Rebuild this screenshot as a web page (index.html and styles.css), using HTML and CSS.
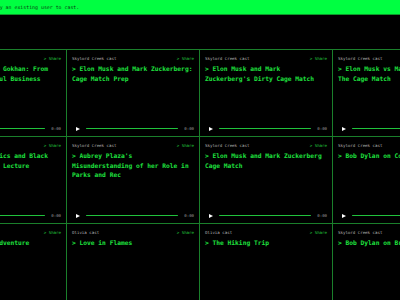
FILE: index.html
```html
<!DOCTYPE html>
<html>
<head>
  <meta charset="UTF-8">
  <meta name="viewport" content="width=device-width, initial-scale=1.0">
  <title>Casts</title>
  <link rel="stylesheet" href="styles.css">
</head>
<body>

  <div class="banner">
    <span class="banner-text">Or try an existing user to cast.</span>
  </div>

  <div class="casts">
    <div class="cast-card">
      <div class="cast-head"><span class="cast-user">Gokhan cast</span><a class="share">&gt; Share</a></div>
      <h3 class="cast-title">&gt; Interview with Gokhan: From Zero to Successful Business</h3>
      <div class="player"><span class="play"></span><span class="track"></span><span class="time">0:00</span></div>
    </div>
    <div class="cast-card">
      <div class="cast-head"><span class="cast-user">Skylord Creek cast</span><a class="share">&gt; Share</a></div>
      <h3 class="cast-title">&gt; Elon Musk and Mark Zuckerberg: Cage Match Prep</h3>
      <div class="player"><span class="play"></span><span class="track"></span><span class="time">0:00</span></div>
    </div>
    <div class="cast-card">
      <div class="cast-head"><span class="cast-user">Skylord Creek cast</span><a class="share">&gt; Share</a></div>
      <h3 class="cast-title">&gt; Elon Musk and Mark Zuckerberg's Dirty Cage Match</h3>
      <div class="player"><span class="play"></span><span class="track"></span><span class="time">0:00</span></div>
    </div>
    <div class="cast-card">
      <div class="cast-head"><span class="cast-user">Skylord Creek cast</span><a class="share">&gt; Share</a></div>
      <h3 class="cast-title">&gt; Elon Musk vs Mark Zuckerberg: The Cage Match</h3>
      <div class="player"><span class="play"></span><span class="track"></span><span class="time">0:00</span></div>
    </div>

    <div class="cast-card">
      <div class="cast-head"><span class="cast-user">Skylord Creek cast</span><a class="share">&gt; Share</a></div>
      <h3 class="cast-title">&gt; Hawking's Physics and Black Holes: The Reith Lecture</h3>
      <div class="player"><span class="play"></span><span class="track"></span><span class="time">0:00</span></div>
    </div>
    <div class="cast-card">
      <div class="cast-head"><span class="cast-user">Skylord Creek cast</span><a class="share">&gt; Share</a></div>
      <h3 class="cast-title">&gt; Aubrey Plaza's Misunderstanding of her Role in Parks and Rec</h3>
      <div class="player"><span class="play"></span><span class="track"></span><span class="time">0:00</span></div>
    </div>
    <div class="cast-card">
      <div class="cast-head"><span class="cast-user">Skylord Creek cast</span><a class="share">&gt; Share</a></div>
      <h3 class="cast-title">&gt; Elon Musk and Mark Zuckerberg Cage Match</h3>
      <div class="player"><span class="play"></span><span class="track"></span><span class="time">0:00</span></div>
    </div>
    <div class="cast-card">
      <div class="cast-head"><span class="cast-user">Skylord Creek cast</span><a class="share">&gt; Share</a></div>
      <h3 class="cast-title">&gt; Bob Dylan on Country Music</h3>
      <div class="player"><span class="play"></span><span class="track"></span><span class="time">0:00</span></div>
    </div>

    <div class="cast-card">
      <div class="cast-head"><span class="cast-user">Olivia cast</span><a class="share">&gt; Share</a></div>
      <h3 class="cast-title">&gt; The Kayaking Adventure</h3>
      <div class="player"><span class="play"></span><span class="track"></span><span class="time">0:00</span></div>
    </div>
    <div class="cast-card">
      <div class="cast-head"><span class="cast-user">Olivia cast</span><a class="share">&gt; Share</a></div>
      <h3 class="cast-title">&gt; Love in Flames</h3>
      <div class="player"><span class="play"></span><span class="track"></span><span class="time">0:00</span></div>
    </div>
    <div class="cast-card">
      <div class="cast-head"><span class="cast-user">Olivia cast</span><a class="share">&gt; Share</a></div>
      <h3 class="cast-title">&gt; The Hiking Trip</h3>
      <div class="player"><span class="play"></span><span class="track"></span><span class="time">0:00</span></div>
    </div>
    <div class="cast-card">
      <div class="cast-head"><span class="cast-user">Skylord Creek cast</span><a class="share">&gt; Share</a></div>
      <h3 class="cast-title">&gt; Bob Dylan on Bruce Springsteen</h3>
      <div class="player"><span class="play"></span><span class="track"></span><span class="time">0:00</span></div>
    </div>
  </div>

</body>
</html>
```

FILE: styles.css
```css
body {
  margin: 0;
  background-color: #000;
  font-family: "DejaVu Sans Mono", monospace;
  overflow: hidden;
}

.banner {
  height: 14px;
  line-height: 14px;
  background-color: #00ff41;
  border-bottom: 1px solid #0b9a2a;
  white-space: nowrap;
}

.banner-text {
  display: block;
  margin-left: -15px; /* page is scrolled sideways */
  font-size: 4.9px;
  color: #0a3a12;
}

.casts {
  display: grid;
  grid-template-columns: repeat(4, 132px);
  grid-auto-rows: 86px;
  gap: 1px;
  width: max-content;
  margin: 34px 0 0 -66px;
  padding-top: 1px;
  background-color: #1a7f2b;
}

.cast-card {
  display: flex;
  flex-direction: column;
  padding: 6px 5px 3px;
  background-color: #000;
}

.cast-head {
  display: flex;
  justify-content: space-between;
  height: 5px;
  line-height: 5px;
  font-size: 4.1px;
}

.cast-user {
  color: #b4b4b4;
}

.share {
  color: #22c93e;
}

.cast-title {
  margin: 3px 0 0;
  font-size: 6.25px;
  line-height: 9.6px;
  font-weight: bold;
  color: #1fe03f;
}

.player {
  display: flex;
  align-items: center;
  height: 9px;
  margin-top: auto;
  padding-left: 4px;
}

.play {
  width: 0;
  height: 0;
  border-top: 2.5px solid transparent;
  border-bottom: 2.5px solid transparent;
  border-left: 4px solid #fff;
}

.track {
  flex: 1;
  height: 1.4px;
  margin: 0 6px;
  border-radius: 1px;
  background-color: #20c23c;
}

.time {
  font-size: 4px;
  color: #9a9a9a;
}
```
